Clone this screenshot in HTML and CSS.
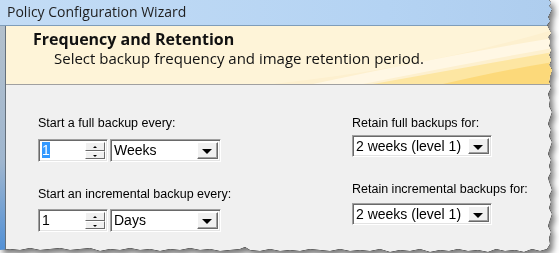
FILE: index.html
```html
<!DOCTYPE html>
<html lang="en">
<head>
    <meta charset="UTF-8">
    <title>Policy Configuration Wizard</title>
    <link rel="stylesheet" href="styles.css">
</head>
<body>

    <div class="frame">
        <div class="shot">
            <div class="titlebar">Policy Configuration Wizard</div>
            <div class="window">
                <div class="side"></div>
                <div class="client">
                    <div class="header">
                        <svg class="swoosh" viewBox="0 0 300 58" preserveAspectRatio="none">
                            <path d="M20 58 Q170 42 300 4 L300 58 Z" fill="#fdf0cf"/>
                            <path d="M60 58 Q190 30 300 12 L300 22 Q200 40 110 58 Z" fill="#fff7e4"/>
                            <path d="M120 58 Q220 40 300 26 L300 58 Z" fill="#fde6a2"/>
                            <path d="M190 58 Q250 44 300 36 L300 58 Z" fill="#fcd97a"/>
                        </svg>
                        <h1>Frequency and Retention</h1>
                        <p>Select backup frequency and image retention period.</p>
                    </div>
                    <div class="body">
                        <div class="col col-left">
                            <label>Start a full backup every:</label>
                            <div class="row">
                                <div class="spin">
                                    <div class="spin-value"><span class="sel">1</span></div>
                                    <div class="spin-btns">
                                        <span class="btn up"></span>
                                        <span class="btn down"></span>
                                    </div>
                                </div>
                                <div class="combo combo-unit">
                                    <span class="combo-text">Weeks</span>
                                    <span class="drop"></span>
                                </div>
                            </div>
                            <label class="second">Start an incremental backup every:</label>
                            <div class="row">
                                <div class="spin">
                                    <div class="spin-value">1</div>
                                    <div class="spin-btns">
                                        <span class="btn up"></span>
                                        <span class="btn down"></span>
                                    </div>
                                </div>
                                <div class="combo combo-unit">
                                    <span class="combo-text">Days</span>
                                    <span class="drop"></span>
                                </div>
                            </div>
                        </div>
                        <div class="col col-right">
                            <label>Retain full backups for:</label>
                            <div class="combo combo-retain">
                                <span class="combo-text">2 weeks (level 1)</span>
                                <span class="drop"></span>
                            </div>
                            <label class="second">Retain incremental backups for:</label>
                            <div class="combo combo-retain">
                                <span class="combo-text">2 weeks (level 1)</span>
                                <span class="drop"></span>
                            </div>
                        </div>
                    </div>
                </div>
            </div>
        </div>
    </div>

</body>
</html>
```

FILE: styles.css
```css
body {
    margin: 0;
    background-color: #ffffff;
    font-family: "Liberation Sans", Arial, sans-serif;
}

/* Screenshot with torn edge and shadow */
.frame {
    width: 553px;
    height: 253px;
    filter: drop-shadow(0 0 0.7px #000) drop-shadow(0 0 0.5px #000) drop-shadow(3px 4px 3px rgba(0, 0, 0, 0.55));
}

.shot {
    width: 553px;
    height: 253px;
    display: flex;
    flex-direction: column;
    background-color: #f0f0f0;
    clip-path: polygon(0 0, 549px 0, 551px 3px, 549px 6px, 552px 9px, 550px 13px, 548px 17px, 550px 21px, 547px 25px, 549px 29px, 551px 33px, 548px 37px, 550px 41px, 549px 46px, 551px 50px, 549px 55px, 551px 60px, 549px 65px, 552px 70px, 550px 76px, 549px 82px, 551px 88px, 548px 94px, 550px 100px, 549px 106px, 552px 112px, 550px 118px, 548px 124px, 551px 130px, 549px 136px, 552px 142px, 550px 148px, 548px 154px, 551px 160px, 549px 166px, 551px 172px, 548px 178px, 550px 184px, 552px 190px, 549px 196px, 551px 202px, 549px 208px, 552px 214px, 550px 220px, 548px 226px, 551px 232px, 549px 238px, 550px 244px, 547px 249px, 540px 251px, 532px 249px, 524px 252px, 515px 250px, 505px 251px, 496px 249px, 488px 252px, 478px 250px, 468px 251px, 458px 249px, 449px 251px, 440px 250px, 430px 252px, 420px 249px, 410px 251px, 400px 250px, 390px 252px, 380px 249px, 370px 251px, 360px 250px, 350px 251px, 340px 249px, 330px 251px, 320px 250px, 310px 249px, 300px 251px, 290px 250px, 280px 251px, 270px 249px, 260px 251px, 250px 250px, 245px 247px, 240px 249px, 230px 250px, 220px 251px, 210px 249px, 200px 250px, 190px 248px, 180px 250px, 170px 249px, 160px 251px, 150px 249px, 140px 250px, 130px 248px, 120px 250px, 110px 249px, 100px 251px, 90px 248px, 80px 249px, 70px 250px, 60px 248px, 50px 249px, 40px 250px, 30px 248px, 20px 250px, 10px 249px, 0 250px);
}

/* Window title bar */
.titlebar {
    height: 25px;
    padding-left: 7px;
    line-height: 24px;
    font-family: "Open Sans", sans-serif;
    font-size: 14px;
    color: #1e1e1e;
    background: linear-gradient(to right, #c3dcf5, #b4d3f3 70%, #aecdee);
    border-bottom: 1px solid #7f9db9;
}

.window {
    flex: 1;
    display: flex;
}

.side {
    width: 5px;
    background: linear-gradient(to bottom, #b3c0cc, #9fb6cf 60%, #4f8fd6);
    border-right: 1px solid #646f7a;
}

.client {
    flex: 1;
    display: flex;
    flex-direction: column;
}

/* Header banner */
.header {
    position: relative;
    height: 58px;
    padding-left: 27px;
    background-color: #fef4d8;
    border-bottom: 1px solid #a0a0a0;
    overflow: hidden;
}

.swoosh {
    position: absolute;
    right: 0;
    bottom: 0;
    width: 300px;
    height: 58px;
}

.header h1,
.header p {
    position: relative;
    margin: 0;
    font-family: "Open Sans", sans-serif;
    color: #111;
}

.header h1 {
    padding-top: 3px;
    font-size: 16px;
    font-weight: bold;
    line-height: 21px;
}

.header p {
    padding-left: 21px;
    font-size: 15px;
    line-height: 16px;
}

/* Form body */
.body {
    display: grid;
    grid-template-columns: 314px auto;
    padding: 31px 0 0 32px;
    font-size: 12.5px;
    color: #000;
}

.col {
    display: flex;
    flex-direction: column;
    align-items: flex-start;
}

.col label {
    line-height: 15px;
}

.col-left label {
    margin-bottom: 8px;
}

.col-left label.second {
    margin-top: 25px;
    margin-bottom: 7px;
}

.col-right label {
    margin-bottom: 4px;
}

.col-right label.second {
    margin-top: 25px;
    margin-bottom: 6px;
}

.row {
    display: flex;
    gap: 2px;
}

/* Sunken 3D field */
.spin,
.combo {
    display: flex;
    box-sizing: border-box;
    background-color: #fff;
    border: 1px solid;
    border-color: #a0a0a0 #ffffff #ffffff #a0a0a0;
    box-shadow: inset 1px 1px 0 #696969, inset -1px -1px 0 #e3e3e3;
    padding: 2px;
}

.spin {
    width: 70px;
    height: 23px;
}

.spin-value {
    flex: 1;
    font-size: 14px;
    line-height: 17px;
    padding-left: 1px;
}

.sel {
    background-color: #3399ff;
    color: #fff;
}

.spin-btns {
    width: 20px;
    display: flex;
    flex-direction: column;
}

.btn {
    flex: 1;
    position: relative;
    background-color: #f0f0f0;
    border: 1px solid;
    border-color: #ffffff #696969 #696969 #ffffff;
}

.btn::after {
    content: "";
    position: absolute;
    left: 7px;
    top: 3px;
    border-left: 2px solid transparent;
    border-right: 2px solid transparent;
}

.btn.up::after {
    border-bottom: 2px solid #000;
}

.btn.down::after {
    border-top: 2px solid #000;
}

.combo {
    align-items: stretch;
    font-size: 14px;
}

.combo-unit {
    width: 111px;
    height: 23px;
}

.combo-retain {
    width: 140px;
    height: 22px;
}

.combo-text {
    flex: 1;
    line-height: 17px;
    padding-left: 1px;
}

.drop {
    width: 19px;
    position: relative;
    background-color: #f0f0f0;
    border: 1px solid;
    border-color: #ffffff #696969 #696969 #ffffff;
    box-shadow: inset -1px -1px 0 #a0a0a0;
}

.drop::after {
    content: "";
    position: absolute;
    left: 4px;
    top: 6px;
    border-left: 5px solid transparent;
    border-right: 5px solid transparent;
    border-top: 5px solid #000;
}
```
